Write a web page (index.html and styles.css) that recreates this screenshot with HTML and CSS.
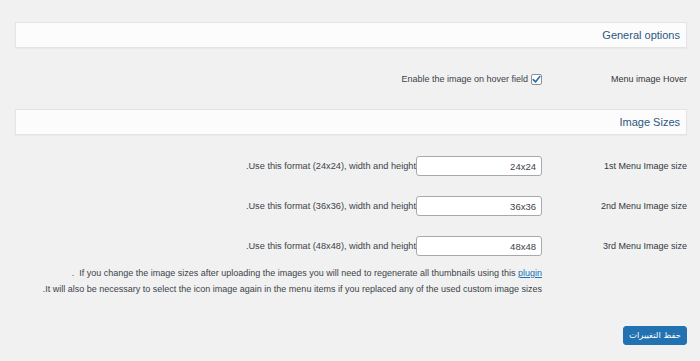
FILE: index.html
```html
<!DOCTYPE html>
<html lang="en" dir="rtl">
<head>
<meta charset="utf-8">
<title>Menu Image Settings</title>
<link rel="stylesheet" href="styles.css">
</head>
<body>
<div class="wrap">
  <div class="panel"><h2 class="panel-title">General options</h2></div>

  <div class="row row-hover">
    <div class="row-label">Menu image Hover</div>
    <div class="row-field">
      <label class="check-label">
        <span class="checkbox"><svg viewBox="0 0 11 11" width="11" height="11"><path d="M2.3 5.6 L4.5 7.9 L8.8 2.6" fill="none" stroke="#2271b1" stroke-width="1.6" stroke-linecap="round" stroke-linejoin="round"/></svg></span>
        <span>Enable the image on hover field</span>
      </label>
    </div>
  </div>

  <div class="panel"><h2 class="panel-title">Image Sizes</h2></div>

  <div class="row row-size first">
    <div class="row-label">1st Menu Image size</div>
    <div class="row-field">
      <input class="size-input" type="text" value="24x24" dir="rtl">
      <span class="desc">Use this format (24x24), width and height.</span>
    </div>
  </div>
  <div class="row row-size">
    <div class="row-label">2nd Menu Image size</div>
    <div class="row-field">
      <input class="size-input" type="text" value="36x36" dir="rtl">
      <span class="desc">Use this format (36x36), width and height.</span>
    </div>
  </div>
  <div class="row row-size">
    <div class="row-label">3rd Menu Image size</div>
    <div class="row-field">
      <input class="size-input" type="text" value="48x48" dir="rtl">
      <span class="desc">Use this format (48x48), width and height.</span>
    </div>
  </div>

  <div class="row row-note">
    <div class="row-label"></div>
    <div class="note">
      <p>If you change the image sizes after uploading the images you will need to regenerate all thumbnails using this <a href="#">plugin</a> &nbsp;.</p>
      <p>It will also be necessary to select the icon image again in the menu items if you replaced any of the used custom image sizes.</p>
    </div>
  </div>

  <div class="actions">
    <button class="button-primary" type="button">حفظ التغييرات</button>
  </div>
</div>
</body>
</html>
```

FILE: styles.css
```css
html, body {
  margin: 0;
  padding: 0;
  background: #f1f1f1;
}

body {
  font-family: "Liberation Sans", "DejaVu Sans", Arial, sans-serif;
  font-size: 9px;
  color: #3c434a;
}

.wrap {
  display: flex;
  flex-direction: column;
  padding: 22px 13px 0 15px;
}

.panel {
  height: 24px;
  display: flex;
  align-items: center;
  background: #fcfcfc;
  border: 1px solid #e3e4e6;
  box-shadow: 0 1px 1px rgba(0,0,0,0.03);
  padding: 0 6px;
}

.panel-title {
  margin: 0;
  font-size: 11px;
  font-weight: normal;
  color: #2a5780;
}

.row {
  display: flex;
  align-items: center;
  height: 20px;
}

.row-hover {
  margin: 21px 0 20px;
}

.row-size {
  margin-top: 20px;
}

.row-size.first {
  margin-top: 21px;
}

.row-label {
  width: 145px;
  flex: none;
  color: #32373c;
}

.row-field {
  display: flex;
  align-items: center;
}

.check-label {
  display: flex;
  align-items: center;
  gap: 3px;
  color: #3c434a;
}

.checkbox {
  width: 9px;
  height: 9px;
  border: 1px solid #8c8f94;
  border-radius: 2px;
  background: #fff;
  display: flex;
  align-items: center;
  justify-content: center;
  overflow: hidden;
}

.checkbox svg {
  flex: none;
}

.size-input {
  box-sizing: border-box;
  width: 126px;
  height: 20px;
  margin: 0;
  padding: 0 5px;
  border: 1px solid #a7aaad;
  border-radius: 3px;
  background: #fff;
  font-family: "Liberation Sans", Arial, sans-serif;
  font-size: 9.5px;
  color: #3c434a;
  text-align: right;
}

.desc {
  color: #3c434a;
  font-size: 9.2px;
}

.row-note {
  height: auto;
  align-items: flex-start;
  margin-top: 9px;
}

.note p {
  margin: 0;
  line-height: 16px;
  color: #3c434a;
}

.note a {
  color: #2271b1;
}

.actions {
  display: flex;
  margin-top: 29px;
}

.button-primary {
  box-sizing: border-box;
  width: 64px;
  height: 19px;
  margin: 0;
  padding: 0;
  border: 1px solid #2271b1;
  border-radius: 3px;
  background: #2271b1;
  color: #fff;
  font-family: "DejaVu Sans", "Noto Sans", sans-serif;
  font-size: 8.5px;
  line-height: 1;
}
```
